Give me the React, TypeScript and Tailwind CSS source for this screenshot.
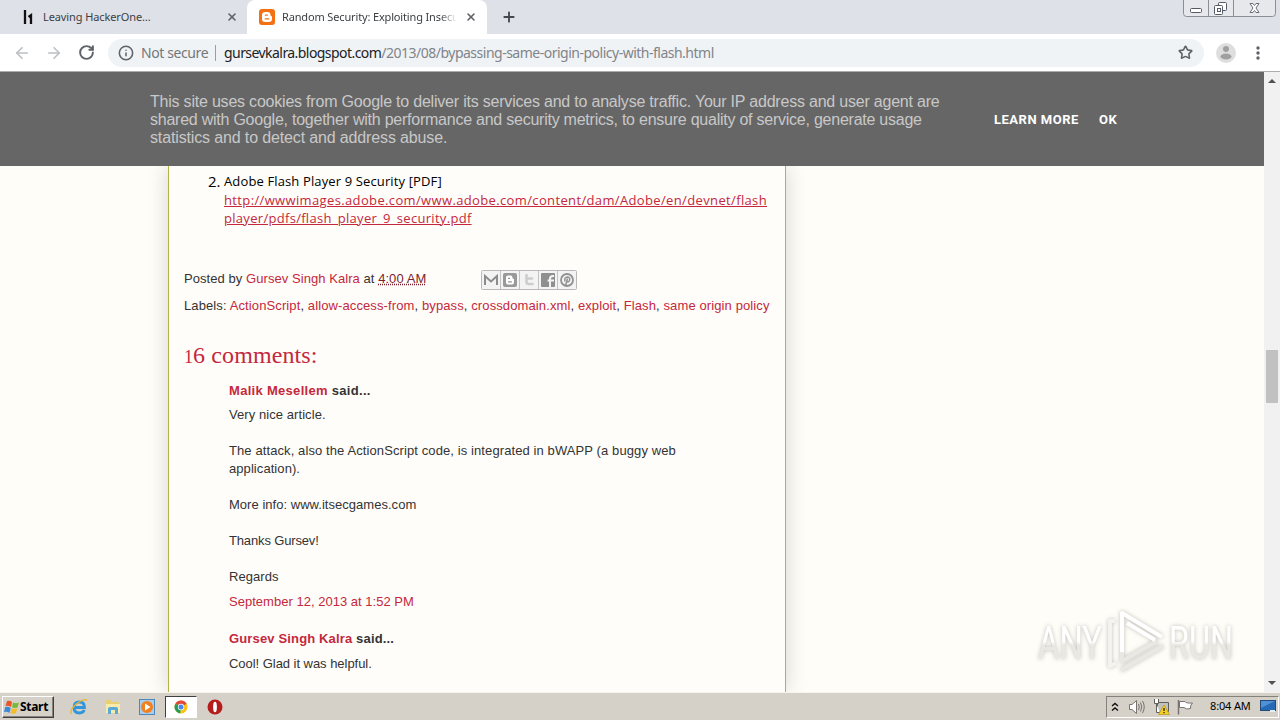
import type { ReactNode } from 'react'
import { X, Plus, ArrowLeft, ArrowRight, RotateCw, Info, Star } from 'lucide-react'

const LABELS = ['ActionScript', 'allow-access-from', 'bypass', 'crossdomain.xml', 'exploit', 'Flash', 'same origin policy']

function HackerOneIcon() {
  return (
    <svg width="10" height="16" viewBox="0 0 10 16">
      <path d="M2 1V15M5.500 8L8 6.200V15" fill="none" stroke="#111" strokeWidth="2.300" />
    </svg>
  )
}

function WindowButtons() {
  return (
    <svg className="mr-1" width="93" height="17" viewBox="0 0 93 17">
      <path d="M.5 0V13.500Q.5 16.500 3.500 16.500H89.500Q92.500 16.500 92.500 13.500V0M25.500 0V16M50.500 0V16" fill="#e6e8ec" stroke="#8b8e97" />
      <rect x="7.500" y="8.500" width="11" height="4" rx="1" fill="#fff" stroke="#555a67" />
      <rect x="35.500" y="2.500" width="8" height="8" rx="1" fill="#fff" stroke="#555a67" />
      <rect x="31.500" y="5.500" width="8" height="9" rx="1" fill="#fff" stroke="#555a67" />
      <rect x="34.500" y="8.500" width="3" height="3" fill="none" stroke="#555a67" />
      <path d="M67 3.500h3l1.500 2 1.500-2h3l-3 4.500 3 4.500h-3l-1.500-2-1.500 2h-3l3-4.500z" fill="#fff" stroke="#6a6e79" />
    </svg>
  )
}

function BloggerB({ className, color, hole }: { className?: string; color: string; hole: string }) {
  return (
    <svg className={className} viewBox="0 0 16 16">
      <path d="M6.200 3H8.600Q11.500 3 11.500 6Q11.500 7 12.200 7Q13 7 13 8V9.800Q13 13 9.800 13H6.200Q3 13 3 9.800V6.200Q3 3 6.200 3Z" fill={color} />
      <path d="M6.300 6.100H8.400M6.300 9.900H9.800" stroke={hole} strokeWidth="1.400" strokeLinecap="round" />
    </svg>
  )
}

function TabStrip() {
  return (
    <div className="flex h-[34px] bg-[#dee1e7] text-[11px] text-[#3c4043]">
      <div className="flex w-[247px] items-center pl-[23px] pr-[9px]">
        <HackerOneIcon />
        <span className="ml-[10px] flex-1 whitespace-nowrap tracking-[-0.1px]">Leaving HackerOne…</span>
        <X size={12} strokeWidth={3.2} color="#5f6368" />
      </div>
      <div className="flex w-[240px] items-center rounded-t-lg bg-white pl-3 pr-[10px]">
        <div className="flex h-4 w-4 items-center justify-center rounded-[3px] bg-[#f57010]">
          <BloggerB className="h-4 w-4" color="#fff" hole="#f57010" />
        </div>
        <span className="ml-[7px] w-[175px] overflow-hidden whitespace-nowrap tracking-[-0.15px] [mask-image:linear-gradient(to_right,#000_90%,transparent)]">
          Random Security: Exploiting Insecure
        </span>
        <X className="ml-auto" size={12} strokeWidth={3.2} color="#5f6368" />
      </div>
      <div className="flex flex-1 items-center pl-[14px]">
        <Plus size={16} strokeWidth={2.8} color="#45484c" />
      </div>
      <WindowButtons />
    </div>
  )
}

function Toolbar() {
  return (
    <div className="flex h-[38px] items-center border-b border-[#adadad] bg-white text-[14px]">
      <ArrowLeft className="ml-[13px]" size={18} strokeWidth={2.2} color="#bdbfc2" />
      <ArrowRight className="ml-[14px]" size={18} strokeWidth={2.2} color="#bdbfc2" />
      <RotateCw className="ml-[15px]" size={17} strokeWidth={2.8} color="#5f6368" />
      <div className="ml-[13px] flex h-7 w-[1096px] items-center rounded-full bg-[#f0f3f5] pl-[10px] pr-[11px]">
        <Info size={16} strokeWidth={2.3} color="#5f6368" />
        <span className="ml-[7px] w-[67px] whitespace-nowrap tracking-[-0.4px] text-[#74777b]">Not secure</span>
        <span className="ml-[7px] h-4 w-px bg-[#9a9da1]" />
        <span className="ml-[8px] whitespace-nowrap tracking-[-0.56px] text-[#202124]">gursevkalra.blogspot.com</span>
        <span className="whitespace-nowrap tracking-[-0.5px] text-[#80848a]">/2013/08/bypassing-same-origin-policy-with-flash.html</span>
        <Star className="ml-auto" size={15} strokeWidth={2.6} color="#5f6368" />
      </div>
      <svg className="ml-[12px]" width="20" height="20" viewBox="0 0 20 20">
        <circle cx="10" cy="10" r="10" fill="#dedede" />
        <circle cx="10" cy="6" r="3" fill="#a0a0a0" />
        <ellipse cx="10" cy="13.500" rx="5.500" ry="3" fill="#a0a0a0" />
      </svg>
      <svg className="ml-[20px]" width="4" height="14" viewBox="0 0 4 14" fill="#5f6368">
        <circle cx="2" cy="2" r="1.700" />
        <circle cx="2" cy="7" r="1.700" />
        <circle cx="2" cy="12" r="1.700" />
      </svg>
    </div>
  )
}

function CookieBar() {
  return (
    <div className="flex h-[94px] items-center bg-[#666] pl-[150px] pt-px font-['Liberation_Sans',Arial,sans-serif] text-[#c8c8c8]">
      <p className="w-[844px] whitespace-nowrap text-[16px] leading-[18px]">
        <span className="block tracking-[-0.21px]">This site uses cookies from Google to deliver its services and to analyse traffic. Your IP address and user agent are</span>
        <span className="block tracking-[-0.24px]">shared with Google, together with performance and security metrics, to ensure quality of service, generate usage</span>
        <span className="block tracking-[-0.14px]">statistics and to detect and address abuse.</span>
      </p>
      <span className="w-[105px] font-['Roboto',sans-serif] text-[13px] font-bold tracking-[0.5px] text-white">LEARN MORE</span>
      <span className="font-['Roboto',sans-serif] text-[13px] font-bold tracking-[0.5px] text-white">OK</span>
    </div>
  )
}

function ShareButtons() {
  return (
    <svg className="mt-[2px]" width="96" height="20" viewBox="0 0 96 20">
      <rect x=".5" y=".5" width="95" height="19" rx="1" fill="#f3f3f3" stroke="#b9b9b9" />
      <path d="M19.500 1V19M38.500 1V19M57.500 1V19M76.500 1V19" stroke="#c3c3c3" />
      <path d="M4 15V6L10 11.500L16 6V15" fill="none" stroke="#8c8c8c" strokeWidth="2" />
      <rect x="22" y="3" width="14" height="14" rx="2" fill="#999" />
      <path d="M27 5.500h2.500q2 0 2 2.200 0 1.300 1.500 1.300v3.500q0 2-2 2h-4q-2 0-2-2v-5q0-2 2-2z" fill="#fff" />
      <path d="M27 8.300h2M27 11.800h4" stroke="#999" strokeWidth="1.300" />
      <path d="M45.500 5V12Q45.500 14 48 14H51.500M45.500 8.500H51" fill="none" stroke="#cdcdcd" strokeWidth="2.600" strokeLinecap="round" />
      <rect x="60" y="3" width="14" height="14" rx="1" fill="#8f8f8f" />
      <path d="M69 17V8.500Q69 6 72 6H73M66.500 10.500H73" fill="none" stroke="#f3f3f3" strokeWidth="2" />
      <circle cx="86" cy="10" r="6" fill="none" stroke="#919191" strokeWidth="1.800" />
      <path d="M84 11.500Q83 7 86.500 7Q89.500 7.500 88.500 10.500Q87.500 12.500 86 11.500M86.500 8.500L84.500 16" fill="none" stroke="#919191" strokeWidth="1.500" />
    </svg>
  )
}

function Link({ children }: { children: ReactNode }) {
  return <a className="text-[#c4283c]">{children}</a>
}

function Post() {
  return (
    <main className="ml-[168px] h-[526px] w-[618px] border-x border-[#b3b34a] bg-[#fffdf9] pl-[15px] pt-[6px] font-['Liberation_Sans',Arial,sans-serif] text-[13px] leading-[18px] text-[#333] shadow-[0_0_20px_rgba(0,0,0,0.16)]">
      <div className="flex font-['Open_Sans','Noto_Sans',sans-serif] text-black">
        <span className="w-10 pl-6 text-[15px]">2.</span>
        <div className="whitespace-nowrap">
          <div className="mb-px tracking-[0.13px]">Adobe Flash Player 9 Security [PDF]</div>
          <a className="text-[#c4283c] underline">
            <span className="block tracking-[0.36px]">http://wwwimages.adobe.com/www.adobe.com/content/dam/Adobe/en/devnet/flash</span>
            <span className="block tracking-[0.3px]">player/pdfs/flash_player_9_security.pdf</span>
          </a>
        </div>
      </div>

      <div className="mt-[43px] flex h-[18px] items-center whitespace-nowrap">
        <span className="w-[297px] tracking-[0.06px]">
          Posted by <Link>Gursev Singh Kalra</Link> at{' '}
          <a className="text-[#7d1f30] underline decoration-dotted">4:00 AM</a>
        </span>
        <ShareButtons />
      </div>
      <div className="mt-[9px] whitespace-nowrap tracking-[0.11px]">
        Labels:{' '}
        {LABELS.map((l, i) => (
          <span key={l}>{i > 0 && ', '}<Link>{l}</Link></span>
        ))}
      </div>

      <h4 className="mt-7 h-6 font-['Liberation_Serif',Georgia,serif] text-[24px] leading-6 tracking-[0.1px] text-[#c4283c]">
        <span className="text-[18px]">1</span>6 comments:
      </h4>

      <div className="mt-[15px] pl-[45px]">
        <div className="font-bold tracking-[0.3px]"><Link>Malik Mesellem</Link> said...</div>
        <p className="mt-[6px] whitespace-nowrap tracking-[0.07px]">
          Very nice article.<br /><br />
          <span className="tracking-[0.1px]">The attack, also the ActionScript code, is integrated in bWAPP (a buggy web</span><br />
          application).<br /><br />
          <span className="tracking-[0.03px]">More info: www.itsecgames.com</span><br /><br />
          <span className="tracking-[-0.15px]">Thanks Gursev!</span><br /><br />
          Regards
        </p>
        <div className="mt-[7px] tracking-[0.02px]"><Link>September 12, 2013 at 1:52 PM</Link></div>
        <div className="mt-[19px] font-bold tracking-[0.15px]"><Link>Gursev Singh Kalra</Link> said...</div>
        <p className="mt-[7px] tracking-[-0.04px]">Cool! Glad it was helpful.</p>
      </div>
    </main>
  )
}

function Scrollbar() {
  return (
    <div className="flex w-4 flex-col items-center bg-[#f1f1f1]">
      <svg width="16" height="17" viewBox="0 0 16 17"><path d="M4 11L8 7L12 11Z" fill="#505050" /></svg>
      <div className="mt-[261px] h-[53px] w-3 bg-[#c1c1c1]" />
      <svg className="mt-auto" width="16" height="17" viewBox="0 0 16 17"><path d="M4 6L8 10L12 6Z" fill="#505050" /></svg>
    </div>
  )
}

function Watermark() {
  return (
    <svg className="absolute left-[1030px] top-[602px] overflow-visible drop-shadow-[0_0_2px_rgba(0,0,0,0.25)]" width="212" height="76" viewBox="0 0 212 76">
      <defs>
        <linearGradient id="fade" x1="0" y1="0" x2="0" y2="1">
          <stop offset="0.48" stopColor="#fff" />
          <stop offset="0.55" stopColor="#e9e8e3" />
        </linearGradient>
      </defs>
      <g fill="url(#fade)" fontFamily="Roboto, sans-serif" fontSize="47">
        <text x="8" y="57" textLength="64" lengthAdjust="spacingAndGlyphs">ANY</text>
        <text x="139" y="57" textLength="64" lengthAdjust="spacingAndGlyphs">RUN</text>
      </g>
      <g fill="none" stroke="#fff" strokeWidth="4" strokeLinejoin="round">
        <path d="M85 19H80V64L86 61" stroke="#f4f3ef" />
        <path d="M92 11V59L127 39" stroke="#e9e8e3" />
        <path d="M92 50V11L132 35" />
        <path d="M91 68L133 44" stroke="#e9e8e3" />
        <path d="M97 21L125 38" />
      </g>
    </svg>
  )
}

function Taskbar() {
  return (
    <div className="flex h-7 items-center border-t border-[#f6f4f0] bg-[#d5d0c8] pl-[2px] pr-px text-black">
      <div className="flex h-[22px] w-[52px] items-center border border-b-[#404040] border-l-white border-r-[#404040] border-t-white pl-px shadow-[inset_-1px_-1px_#85817b]">
        <svg width="16" height="16" viewBox="0 0 16 16">
          <path d="M3 2Q6 1 8 3L7 8Q4 6 1.500 7Z" fill="#e8562a" />
          <path d="M9 3.500Q12 5 15 3.500L13.500 8.500Q11 9.500 8 8.300Z" fill="#78b83a" />
          <path d="M1.300 8Q4 7 6.700 9L5.500 14Q3 12 0 13Z" fill="#3b8ad8" />
          <path d="M7.800 9.300Q10.500 10.500 13.200 9.500L12 14Q9 15.500 6.500 14Z" fill="#f5bd25" />
        </svg>
        <span className="font-['Noto_Sans',sans-serif] text-[12px] font-bold tracking-[-0.3px]">Start</span>
      </div>
      <svg className="ml-[16px]" width="18" height="18" viewBox="0 0 18 18">
        <path d="M4 9.500H14.500Q14.500 4 9.500 4Q4 4 4 9.500Q4 15 9.500 15Q13 15 14.300 12" fill="none" stroke="#3196db" strokeWidth="2.800" />
        <path d="M1.500 16Q-1 12 7 5.500Q15 0 17 2.500" fill="none" stroke="#e5b72f" strokeWidth="1.300" />
      </svg>
      <svg className="ml-[16px]" width="18" height="18" viewBox="0 0 18 18">
        <path d="M2 2H7L8 4H15V14H2Z" fill="#e8cf72" />
        <path d="M2 6H16V15H2Z" fill="#f8eaa8" />
        <path d="M4 16V10.500Q4 9 6 9H12Q14 9 14 10.500V16H11V12H7V16Z" fill="#5ba9d8" />
      </svg>
      <svg className="ml-[17px]" width="16" height="16" viewBox="0 0 16 16">
        <rect x=".5" y=".5" width="15" height="15" fill="#a9cdea" stroke="#4d88ba" />
        <circle cx="8" cy="8" r="6" fill="#f08020" />
        <path d="M6 4.500L11.500 8L6 11.500Z" fill="#fff" />
      </svg>
      <div className="ml-[10px] flex h-[22px] w-[32px] items-center justify-center border border-b-white border-l-[#404040] border-r-white border-t-[#404040] bg-white">
        <svg width="14" height="14" viewBox="0 0 14 14">
          <circle cx="7" cy="7" r="6.500" fill="#fbc116" />
          <path d="M7 7L1.400 3.700A6.500 6.500 0 0 1 12.700 3.800Z" fill="#de4a3b" />
          <path d="M7 7L1.400 3.700A6.500 6.500 0 0 0 6.200 13.450Z" fill="#1f9d58" />
          <circle cx="7" cy="7" r="3.200" fill="#fff" />
          <circle cx="7" cy="7" r="2.500" fill="#4a86e8" />
        </svg>
      </div>
      <svg className="ml-[10px]" width="16" height="16" viewBox="0 0 16 16">
        <circle cx="8" cy="8" r="7.500" fill="#b51c1c" />
        <ellipse cx="8" cy="8" rx="1.900" ry="5.300" fill="#fff" />
      </svg>

      <div className="ml-auto flex h-[22px] w-[173px] items-center border border-b-white border-l-[#85817b] border-r-white border-t-[#85817b] pl-[4px]">
        <svg width="8" height="10" viewBox="0 0 8 10" fill="none" stroke="#111" strokeWidth="1.400">
          <path d="M1 4L4 1.500L7 4M1 8.500L4 6L7 8.500" />
        </svg>
        <svg className="ml-[9px]" width="18" height="16" viewBox="0 0 18 16" fill="#fff" stroke="#77746f">
          <path d="M1.500 5.500H4L8.500 1.500V14.500L4 10.500H1.500Z" />
          <path d="M10.500 5Q12 8 10.500 11M12.500 3.500Q15 8 12.500 12.500M14.500 2Q18 8 14.500 14" fill="none" />
        </svg>
        <svg className="ml-[7px]" width="17" height="17" viewBox="0 0 17 17">
          <path d="M4.500 4.500H15.500V13.500H4.500Z" fill="#bfc2bd" stroke="#5f5f5c" />
          <path d="M1.500 1V5.500H5.500V1M3.500 6V14.500H7" fill="#fff" stroke="#5f5f5c" />
          <path d="M11 7L16.500 16.500H5.500Z" fill="#f5d126" stroke="#b99a14" strokeWidth=".7" />
          <path d="M11 10V13M11 14V15.300" stroke="#222" strokeWidth="1.300" />
        </svg>
        <svg className="ml-[7px]" width="17" height="16" viewBox="0 0 17 16">
          <path d="M1.500 1V15.500" stroke="#77746f" strokeWidth="1.500" />
          <path d="M2.500 2.500H8Q9 4.500 15.500 4Q13 6 13.500 9.500Q9 11 7 8.500H2.500Z" fill="#fff" stroke="#77746f" />
        </svg>
        <span className="ml-[16px] w-[41px] whitespace-nowrap text-[11px] tracking-[-0.15px]">8:04 AM</span>
        <svg className="ml-[9px]" width="16" height="13" viewBox="0 0 16 13">
          <rect x=".5" y=".5" width="15" height="10" fill="#2669b5" stroke="#244a77" />
          <path d="M1 1H15L1 8Z" fill="#4f91d5" />
          <path d="M10 11H15" stroke="#e4eef7" strokeWidth="2" />
        </svg>
      </div>
    </div>
  )
}

export default function App() {
  return (
    <div className="flex h-[720px] w-[1280px] flex-col overflow-hidden bg-[#fffdf7] font-['Noto_Sans','Open_Sans',sans-serif]">
      <TabStrip />
      <Toolbar />
      <div className="flex h-[620px] overflow-hidden">
        <div className="flex-1 overflow-hidden">
          <div className="relative z-10"><CookieBar /></div>
          <Post />
        </div>
        <Scrollbar />
      </div>
      <Taskbar />
      <Watermark />
    </div>
  )
}
